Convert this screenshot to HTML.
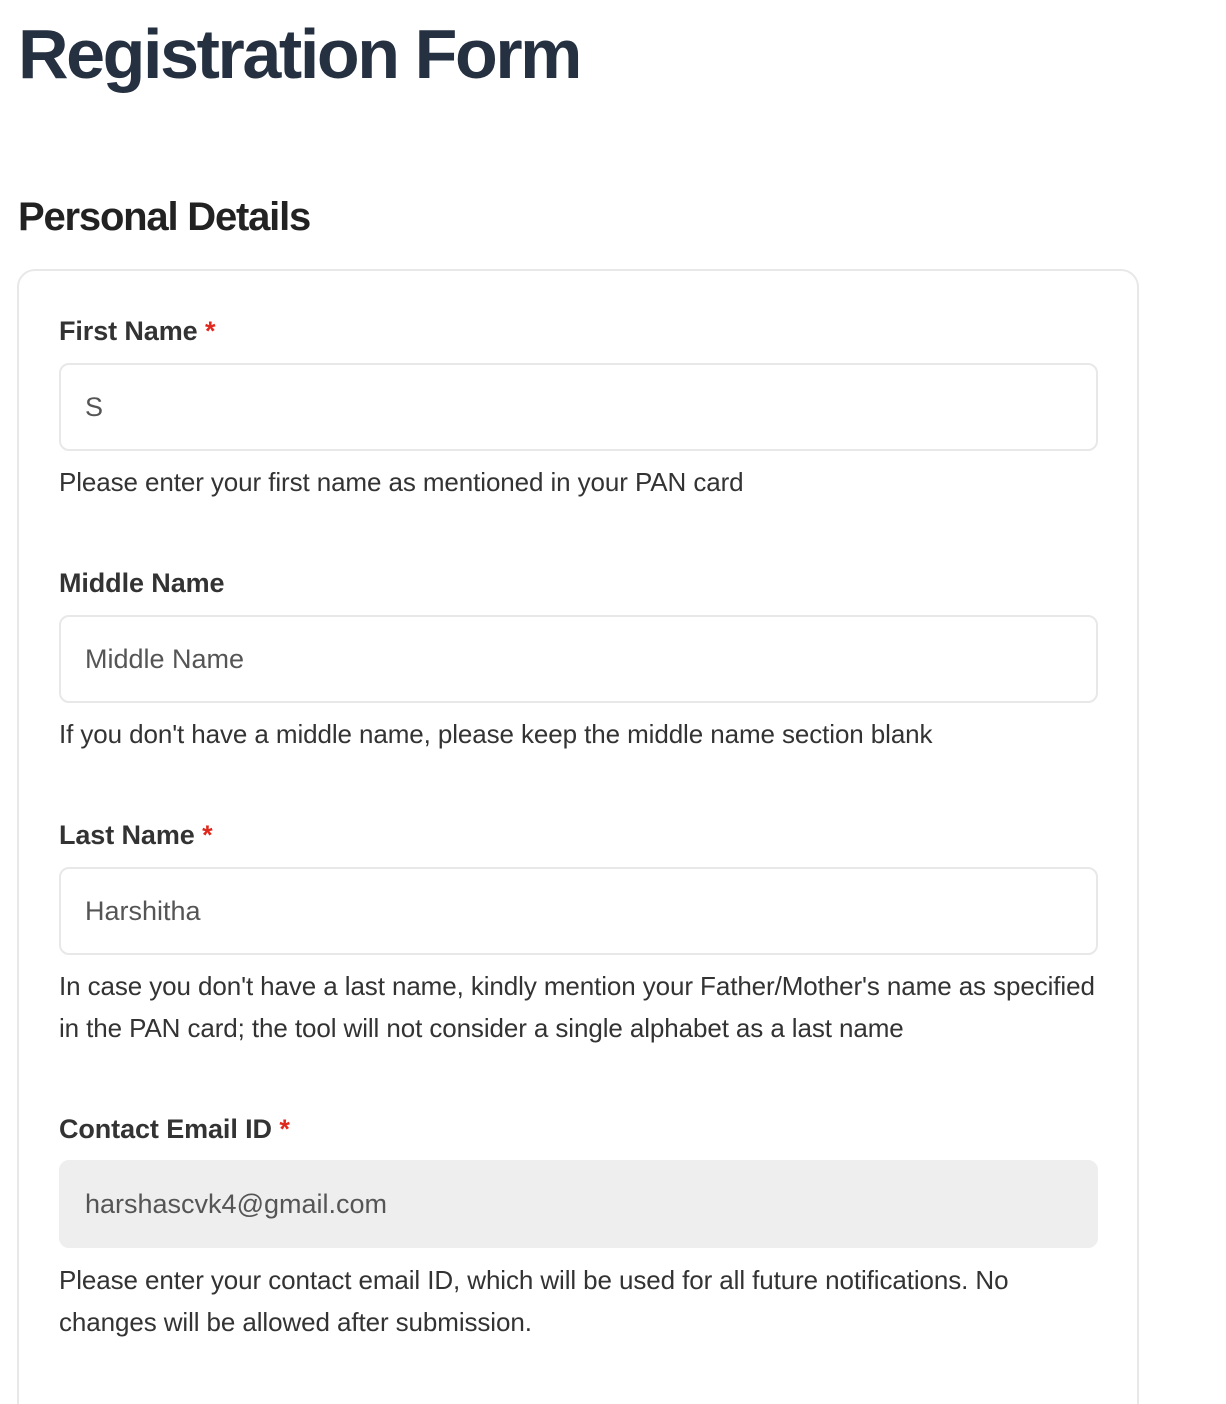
<!DOCTYPE html>
<html style="height:1404px;overflow:hidden"><head><meta charset="utf-8"><style>
body{margin:0;width:1226px;height:1404px;background:#fff;font-family:"Liberation Sans",Arial,sans-serif;overflow:hidden;position:relative}
h1{position:absolute;left:18px;top:14px;margin:0;font-size:70px;font-weight:bold;color:#253040;letter-spacing:-2.4px}
h2{position:absolute;left:18px;top:195px;margin:0;font-size:40px;font-weight:bold;color:#222;letter-spacing:-1.2px}
.card{position:absolute;left:17px;top:269px;width:1118px;height:1200px;border:2px solid #e8e8e8;border-radius:18px}
.lab{position:absolute;left:59px;font-size:27px;font-weight:bold;color:#333;letter-spacing:-0.1px}
.lab span{color:#e0281c}
.inp{position:absolute;left:59px;height:84px;border:2px solid #e8e8e8;border-radius:10px;font-size:27px;color:#555;line-height:84px;padding-left:24px;width:1011px}
.help{position:absolute;left:59px;font-size:26px;color:#333;line-height:42px;white-space:nowrap;letter-spacing:-0.1px}
</style></head><body>
<h1>Registration Form</h1>
<h2>Personal Details</h2>
<div class="card"></div>
<div class="lab" style="top:316px">First Name <span>*</span></div>
<div class="inp" style="top:363px">S</div>
<div class="help" style="top:461px">Please enter your first name as mentioned in your PAN card</div>
<div class="lab" style="top:568px">Middle Name</div>
<div class="inp" style="top:615px">Middle Name</div>
<div class="help" style="top:713px">If you don't have a middle name, please keep the middle name section blank</div>
<div class="lab" style="top:820px">Last Name <span>*</span></div>
<div class="inp" style="top:867px">Harshitha</div>
<div class="help" style="top:965px">In case you don't have a last name, kindly mention your Father/Mother's name as specified<br>in the PAN card; the tool will not consider a single alphabet as a last name</div>
<div class="lab" style="top:1114px">Contact Email ID <span>*</span></div>
<div class="inp" style="top:1160px;background:#eee;border-color:#eee">harshascvk4@gmail.com</div>
<div class="help" style="top:1259px">Please enter your contact email ID, which will be used for all future notifications. No<br>changes will be allowed after submission.</div>
</body></html>
